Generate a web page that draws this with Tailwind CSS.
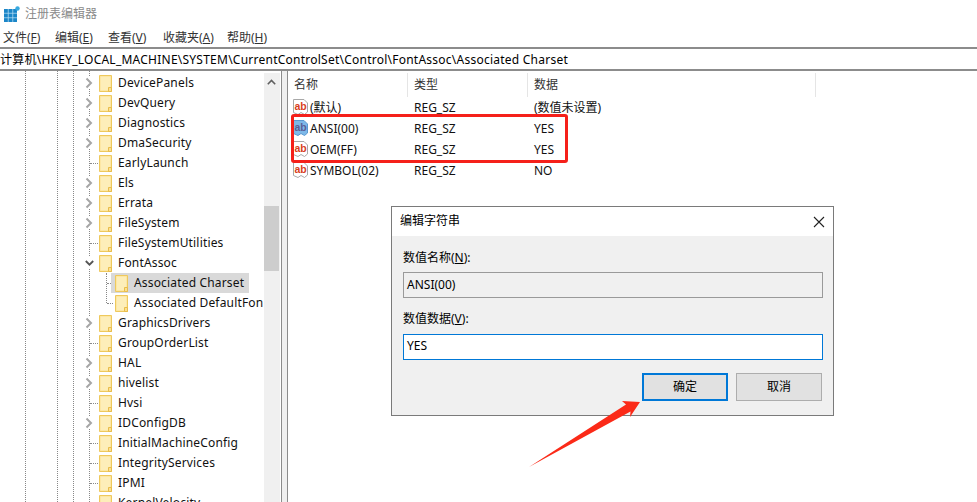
<!DOCTYPE html>
<html lang="zh-CN">
<head>
  <meta charset="UTF-8">
  <title>注册表编辑器</title>
  <script src="https://cdn.jsdelivr.net/npm/@tailwindcss/browser@4"></script>
</head>
<body class="bg-white overflow-hidden">
  <!-- shared icons -->
  <svg class="hidden">
    <symbol id="folder" viewBox="0 0 13 17">
      <path d="M.5 .5H12.5V16.5H.5Z" fill="#fde08f" stroke="#eec95d"/>
      <path d="M1.5 1.5H11.5V13H9V15.5H1.5Z" fill="#fdeeb9"/>
      <path d="M9.5 12.5H12.5V16.5H9.5Z" fill="#fde08f" stroke="#e8bd4c"/>
    </symbol>
    <symbol id="chev" viewBox="0 0 8 12">
      <path d="M1.5 1.5L6 6L1.5 10.5" fill="none" stroke="#a6a6a6" stroke-width="2"/>
    </symbol>
    <symbol id="ab" viewBox="0 0 15 17">
      <path d="M.5 .5H11L14.5 4V13L11.5 15.5L8 13.5L5 15.5L.5 13.5Z" fill="#fff" stroke="#a8a8a8"/>
      <text x="1.5" y="11" font-family="Liberation Sans" font-size="10.5" font-weight="700" fill="#d8401c">ab</text>
    </symbol>
    <symbol id="ab-sel" viewBox="0 0 15 17">
      <path d="M.5 .5H11L14.5 4V13L11.5 15.5L8 13.5L5 15.5L.5 13.5Z" fill="#7db8e8" stroke="#5a98d0"/>
      <text x="1.5" y="11" font-family="Liberation Sans" font-size="10.5" font-weight="700" fill="#5a5f96">ab</text>
    </symbol>
  </svg>

  <div class="relative flex flex-col w-[977px] h-[502px] overflow-hidden text-[12px] text-[#111] font-['Noto_Sans','Noto_Sans_CJK_SC',sans-serif]">
    <!-- title bar -->
    <div class="flex items-center h-[27px] shrink-0">
      <svg class="ml-1 w-[16px] h-[16px]" viewBox="0 0 16 16">
        <path d="M0 3H13V16H0Z" fill="#1b86c8"/>
        <path d="M4.25 3V16M8.75 3V16M0 7.25H13M0 11.75H13" stroke="#bfe3f6" stroke-width=".7"/>
        <circle cx="13.5" cy="2.5" r="2.2" fill="#37a9df"/>
      </svg>
      <span class="ml-[5px] text-[#8a8a8a]">注册表编辑器</span>
    </div>

    <!-- menu -->
    <div class="flex items-center h-[20px] pt-px shrink-0 pl-[3px] text-[#333]">
      <span class="w-[52px]">文件(<u>F</u>)</span>
      <span class="w-[53px]">编辑(<u>E</u>)</span>
      <span class="w-[55px]">查看(<u>V</u>)</span>
      <span class="w-[64px]">收藏夹(<u>A</u>)</span>
      <span>帮助(<u>H</u>)</span>
    </div>

    <!-- address bar -->
    <div class="flex items-center h-[24px] pt-px shrink-0 border-y-2 border-[#8c8c8c] whitespace-nowrap text-black tracking-[0.24px]">计算机\HKEY_LOCAL_MACHINE\SYSTEM\CurrentControlSet\Control\FontAssoc\Associated Charset</div>

    <div class="flex flex-1 min-h-0">
      <!-- tree -->
      <div class="relative w-[280px] shrink-0 overflow-hidden pt-[2px] tracking-[0.17px]">
        <div class="absolute left-[25px] top-0 bottom-0 border-l border-dotted border-[#888]"></div>
        <div class="absolute left-[57px] top-0 bottom-0 border-l border-dotted border-[#888]"></div>
        <div class="absolute left-[73px] top-0 bottom-0 border-l border-dotted border-[#888]"></div>
        <div class="absolute left-[89px] top-0 bottom-0 border-l border-dotted border-[#888]"></div>
        <div class="absolute left-[106px] top-[202px] h-[30px] border-l border-dotted border-[#888]"></div>
        <div class="absolute left-[264px] top-[2px] bottom-0 w-[16px] bg-[#f0f0f0]">
          <svg class="absolute left-[3px] top-[6px] w-[9px] h-[6px]" viewBox="0 0 9 6"><path d="M.8 5.2L4.5 1.5L8.2 5.2" fill="none" stroke="#606060" stroke-width="1.6"/></svg>
          <div class="absolute top-[133px] left-0 w-[15px] h-[65px] bg-[#cdcdcd]"></div>
        </div>

        <div class="relative flex flex-col w-[264px] overflow-hidden">
          <div class="flex items-center h-[20px] pl-[85px]"><svg class="w-[8px] h-[12px] bg-white"><use href="#chev"/></svg><svg class="ml-[6px] w-[13px] h-[17px]"><use href="#folder"/></svg><span class="ml-[6px]">DevicePanels</span></div>
          <div class="flex items-center h-[20px] pl-[85px]"><svg class="w-[8px] h-[12px] bg-white"><use href="#chev"/></svg><svg class="ml-[6px] w-[13px] h-[17px]"><use href="#folder"/></svg><span class="ml-[6px]">DevQuery</span></div>
          <div class="flex items-center h-[20px] pl-[85px]"><svg class="w-[8px] h-[12px] bg-white"><use href="#chev"/></svg><svg class="ml-[6px] w-[13px] h-[17px]"><use href="#folder"/></svg><span class="ml-[6px]">Diagnostics</span></div>
          <div class="flex items-center h-[20px] pl-[85px]"><svg class="w-[8px] h-[12px] bg-white"><use href="#chev"/></svg><svg class="ml-[6px] w-[13px] h-[17px]"><use href="#folder"/></svg><span class="ml-[6px]">DmaSecurity</span></div>
          <div class="flex items-center h-[20px] pl-[90px]"><span class="w-[8px] mr-px border-t border-dotted border-[#888]"></span><svg class="w-[13px] h-[17px]"><use href="#folder"/></svg><span class="ml-[6px]">EarlyLaunch</span></div>
          <div class="flex items-center h-[20px] pl-[85px]"><svg class="w-[8px] h-[12px] bg-white"><use href="#chev"/></svg><svg class="ml-[6px] w-[13px] h-[17px]"><use href="#folder"/></svg><span class="ml-[6px]">Els</span></div>
          <div class="flex items-center h-[20px] pl-[85px]"><svg class="w-[8px] h-[12px] bg-white"><use href="#chev"/></svg><svg class="ml-[6px] w-[13px] h-[17px]"><use href="#folder"/></svg><span class="ml-[6px]">Errata</span></div>
          <div class="flex items-center h-[20px] pl-[85px]"><svg class="w-[8px] h-[12px] bg-white"><use href="#chev"/></svg><svg class="ml-[6px] w-[13px] h-[17px]"><use href="#folder"/></svg><span class="ml-[6px]">FileSystem</span></div>
          <div class="flex items-center h-[20px] pl-[90px]"><span class="w-[8px] mr-px border-t border-dotted border-[#888]"></span><svg class="w-[13px] h-[17px]"><use href="#folder"/></svg><span class="ml-[6px]">FileSystemUtilities</span></div>
          <div class="flex items-center h-[20px] pl-[85px]"><svg class="w-[9px] h-[12px] bg-white" viewBox="0 0 9 12"><path d="M.8 4L4.5 7.7L8.2 4" fill="none" stroke="#555" stroke-width="1.8"/></svg><svg class="ml-[5px] w-[13px] h-[17px]"><use href="#folder"/></svg><span class="ml-[6px]">FontAssoc</span></div>
          <div class="flex items-center h-[20px] pl-[107px] relative">
            <span class="w-[6px] border-t border-dotted border-[#888]"></span>
            <div class="absolute left-[111px] w-[138px] h-[20px] bg-[#d9d9d9]"></div>
            <svg class="relative ml-[2px] w-[13px] h-[17px]"><use href="#folder"/></svg><span class="relative ml-[6px]">Associated Charset</span>
          </div>
          <div class="flex items-center h-[20px] pl-[107px]"><span class="w-[6px] mr-[2px] border-t border-dotted border-[#888]"></span><svg class="w-[13px] h-[17px]"><use href="#folder"/></svg><span class="ml-[6px] whitespace-nowrap">Associated DefaultFon</span></div>
          <div class="flex items-center h-[20px] pl-[85px]"><svg class="w-[8px] h-[12px] bg-white"><use href="#chev"/></svg><svg class="ml-[6px] w-[13px] h-[17px]"><use href="#folder"/></svg><span class="ml-[6px]">GraphicsDrivers</span></div>
          <div class="flex items-center h-[20px] pl-[90px]"><span class="w-[8px] mr-px border-t border-dotted border-[#888]"></span><svg class="w-[13px] h-[17px]"><use href="#folder"/></svg><span class="ml-[6px]">GroupOrderList</span></div>
          <div class="flex items-center h-[20px] pl-[85px]"><svg class="w-[8px] h-[12px] bg-white"><use href="#chev"/></svg><svg class="ml-[6px] w-[13px] h-[17px]"><use href="#folder"/></svg><span class="ml-[6px]">HAL</span></div>
          <div class="flex items-center h-[20px] pl-[85px]"><svg class="w-[8px] h-[12px] bg-white"><use href="#chev"/></svg><svg class="ml-[6px] w-[13px] h-[17px]"><use href="#folder"/></svg><span class="ml-[6px]">hivelist</span></div>
          <div class="flex items-center h-[20px] pl-[90px]"><span class="w-[8px] mr-px border-t border-dotted border-[#888]"></span><svg class="w-[13px] h-[17px]"><use href="#folder"/></svg><span class="ml-[6px]">Hvsi</span></div>
          <div class="flex items-center h-[20px] pl-[85px]"><svg class="w-[8px] h-[12px] bg-white"><use href="#chev"/></svg><svg class="ml-[6px] w-[13px] h-[17px]"><use href="#folder"/></svg><span class="ml-[6px]">IDConfigDB</span></div>
          <div class="flex items-center h-[20px] pl-[90px]"><span class="w-[8px] mr-px border-t border-dotted border-[#888]"></span><svg class="w-[13px] h-[17px]"><use href="#folder"/></svg><span class="ml-[6px]">InitialMachineConfig</span></div>
          <div class="flex items-center h-[20px] pl-[90px]"><span class="w-[8px] mr-px border-t border-dotted border-[#888]"></span><svg class="w-[13px] h-[17px]"><use href="#folder"/></svg><span class="ml-[6px]">IntegrityServices</span></div>
          <div class="flex items-center h-[20px] pl-[90px]"><span class="w-[8px] mr-px border-t border-dotted border-[#888]"></span><svg class="w-[13px] h-[17px]"><use href="#folder"/></svg><span class="ml-[6px]">IPMI</span></div>
          <div class="flex items-center h-[20px] pl-[90px]"><span class="w-[8px] mr-px border-t border-dotted border-[#888]"></span><svg class="w-[13px] h-[17px]"><use href="#folder"/></svg><span class="ml-[6px]">KernelVelocity</span></div>
        </div>
      </div>

      <!-- splitter -->
      <div class="w-[7px] shrink-0 ml-px bg-[#f0f0f0] border-x border-[#8c8c8c]"></div>

      <!-- values list -->
      <div class="flex-1 min-w-0 pl-[5px]">
        <div class="flex h-[26px] items-center pt-[2px] text-[#333]">
          <span class="w-[115px] pl-[1px] h-full flex items-center border-r border-[#e5e5e5]">名称</span>
          <span class="w-[120px] pl-[6px] h-full flex items-center border-r border-[#e5e5e5]">类型</span>
          <span class="w-[288px] pl-[6px] h-full flex items-center border-r border-[#e5e5e5]">数据</span>
        </div>
        <div class="flex h-[21px] items-center"><svg class="w-[15px] h-[17px] shrink-0"><use href="#ab"/></svg><span class="w-[104px] ml-[2px]">(默认)</span><span class="w-[120px]">REG_SZ</span><span>(数值未设置)</span></div>
        <div class="flex h-[21px] items-center"><svg class="w-[15px] h-[17px] shrink-0"><use href="#ab-sel"/></svg><span class="w-[104px] ml-[2px]">ANSI(00)</span><span class="w-[120px]">REG_SZ</span><span>YES</span></div>
        <div class="flex h-[21px] items-center"><svg class="w-[15px] h-[17px] shrink-0"><use href="#ab"/></svg><span class="w-[104px] ml-[2px]">OEM(FF)</span><span class="w-[120px]">REG_SZ</span><span>YES</span></div>
        <div class="flex h-[21px] items-center"><svg class="w-[15px] h-[17px] shrink-0"><use href="#ab"/></svg><span class="w-[104px] ml-[2px]">SYMBOL(02)</span><span class="w-[120px]">REG_SZ</span><span>NO</span></div>
      </div>
    </div>

    <!-- red highlight -->
    <div class="absolute left-[291px] top-[114px] w-[277px] h-[49px] border-[3px] border-[#f5201a] rounded-[3px]"></div>

    <!-- dialog -->
    <div class="absolute left-[391px] top-[206px] w-[443px] h-[210px] flex flex-col bg-[#f0f0f0] border border-[#7a7a7a] text-black">
      <div class="flex items-center justify-between h-[29px] pb-[2px] shrink-0 bg-white px-[8px]">
        <span>编辑字符串</span>
        <svg class="w-[12px] h-[12px] mt-[2px]" viewBox="0 0 12 12"><path d="M1 1L11 11M11 1L1 11" stroke="#222" stroke-width="1.1"/></svg>
      </div>
      <div class="flex flex-col flex-1 px-[11px]">
        <div class="mt-[13px] h-[17px] leading-[17px]">数值名称(<u>N</u>):</div>
        <div class="mt-[6px] mr-[-1px] h-[26px] flex items-center px-[3px] bg-[#f0f0f0] border border-[#9a9a9a]">ANSI(00)</div>
        <div class="mt-[12px] h-[17px] leading-[17px]">数值数据(<u>V</u>):</div>
        <div class="mt-[7px] mr-[-1px] h-[26px] flex items-center pb-[2px] px-[3px] bg-white border border-[#0078d7]">YES</div>
        <div class="flex justify-end gap-[8px] mt-[13px]">
          <div class="w-[86px] h-[28px] flex items-center justify-center bg-[#e1e1e1] border-2 border-[#0078d7]">确定</div>
          <div class="w-[86px] h-[28px] flex items-center justify-center bg-[#e1e1e1] border border-[#adadad]">取消</div>
        </div>
      </div>
    </div>

    <!-- red arrow -->
    <svg class="absolute left-0 top-0 w-[977px] h-[502px] pointer-events-none" viewBox="0 0 977 502">
      <path d="M529 467L626 404.5L622 401L640 402L630 417L630.5 411.5Z" fill="#fb2a18"/>
    </svg>
  </div>
</body>
</html>
